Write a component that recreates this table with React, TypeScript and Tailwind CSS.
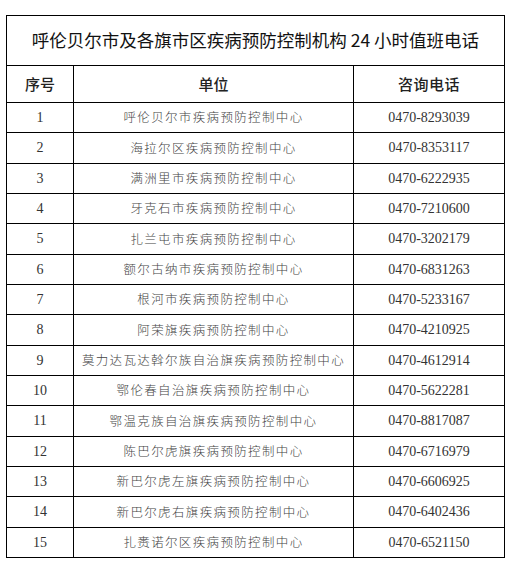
const rows: [string, string][] = [
  ['呼伦贝尔市疾病预防控制中心', '0470-8293039'],
  ['海拉尔区疾病预防控制中心', '0470-8353117'],
  ['满洲里市疾病预防控制中心', '0470-6222935'],
  ['牙克石市疾病预防控制中心', '0470-7210600'],
  ['扎兰屯市疾病预防控制中心', '0470-3202179'],
  ['额尔古纳市疾病预防控制中心', '0470-6831263'],
  ['根河市疾病预防控制中心', '0470-5233167'],
  ['阿荣旗疾病预防控制中心', '0470-4210925'],
  ['莫力达瓦达斡尔族自治旗疾病预防控制中心', '0470-4612914'],
  ['鄂伦春自治旗疾病预防控制中心', '0470-5622281'],
  ['鄂温克族自治旗疾病预防控制中心', '0470-8817087'],
  ['陈巴尔虎旗疾病预防控制中心', '0470-6716979'],
  ['新巴尔虎左旗疾病预防控制中心', '0470-6606925'],
  ['新巴尔虎右旗疾病预防控制中心', '0470-6402436'],
  ['扎赉诺尔区疾病预防控制中心', '0470-6521150'],
];

const sans = 'font-["Noto_Sans_CJK_SC",sans-serif]';
const serif = 'font-["Liberation_Serif","Noto_Serif_CJK_SC","Noto_Sans_CJK_SC",serif]';

export default function App() {
  return (
    <div className="w-[512px] h-[566px] bg-white pt-[15px] pl-[6px]">
      <table className="w-[498px] border-collapse table-fixed text-center">
        <colgroup>
          <col className="w-[67px]" />
          <col className="w-[280px]" />
          <col className="w-[151px]" />
        </colgroup>
        <thead>
          <tr className="h-[50px]">
            <th
              colSpan={3}
              className={`border border-black font-normal text-[17.5px] text-[#111] ${sans}`}
            >
              呼伦贝尔市及各旗市区疾病预防控制机构 24 小时值班电话
            </th>
          </tr>
          <tr className={`h-[37px] text-[15px] text-[#222] font-medium ${sans}`}>
            <th className="border border-black font-medium">序号</th>
            <th className="border border-black font-medium">单位</th>
            <th className="border border-black font-medium tracking-[0.5px]">咨询电话</th>
          </tr>
        </thead>
        <tbody>
          {rows.map(([unit, phone], i) => (
            <tr key={i} className="h-[30.33px]">
              <td className={`border border-black text-[14px] text-[#333] ${serif}`}>{i + 1}</td>
              <td className={`border border-black text-[12.5px] tracking-[1.35px] text-[#444] font-light ${sans}`}>
                {unit}
              </td>
              <td className={`border border-black text-[14px] text-[#333] ${serif}`}>{phone}</td>
            </tr>
          ))}
        </tbody>
      </table>
    </div>
  );
}
